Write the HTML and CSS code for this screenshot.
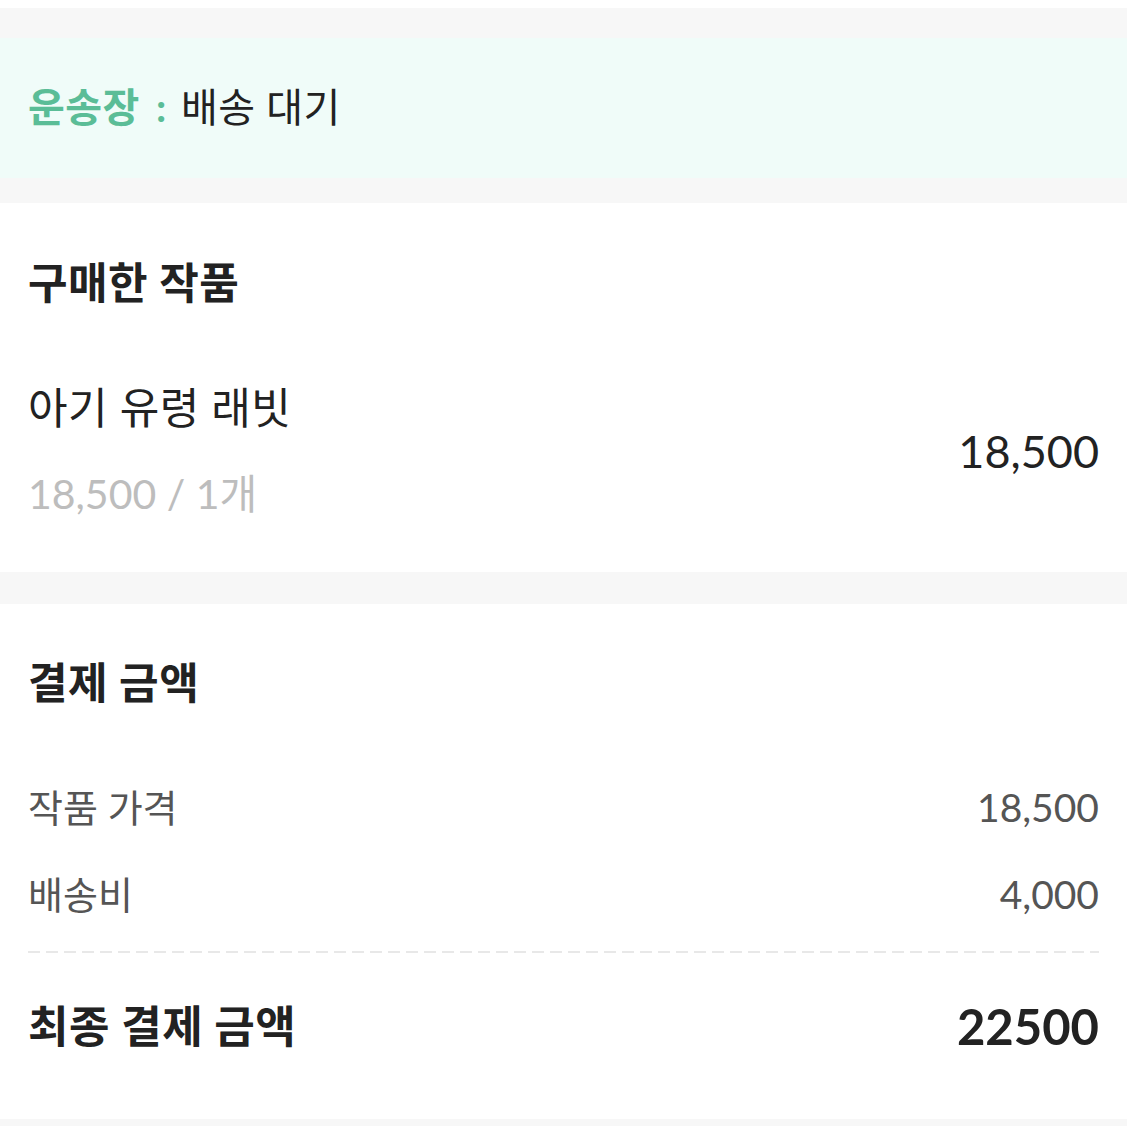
FILE: index.html
```html
<!DOCTYPE html>
<html lang="ko">
<head>
<meta charset="utf-8">
<link rel="stylesheet" href="styles.css">
</head>
<body>
<div class="page">
  <div class="status-wrap">
    <div class="status">
      <span class="status-label">운송장 :</span> <span class="status-value">배송 대기</span>
    </div>
  </div>

  <section class="card">
    <h2 class="title">구매한 작품</h2>
    <div class="product">
      <div class="product-info">
        <div class="product-name">아기 유령 래빗</div>
        <div class="product-sub">18,500 / 1개</div>
      </div>
      <div class="product-price">18,500</div>
    </div>
  </section>

  <div class="divider"></div>

  <section class="card pay">
    <h2 class="title">결제 금액</h2>
    <div class="rows">
      <div class="row"><span class="label">작품 가격</span><span class="num">18,500</span></div>
      <div class="row"><span class="label">배송비</span><span class="num">4,000</span></div>
    </div>
    <div class="dash"></div>
    <div class="total"><span class="label">최종 결제 금액</span><span class="num">22500</span></div>
  </section>

  <div class="bottom"></div>
</div>
</body>
</html>
```

FILE: styles.css
```css
html, body {
  margin: 0;
  padding: 0;
  background: #ffffff;
}
body {
  font-family: "Lato", "Noto Sans CJK KR", sans-serif;
  color: #222222;
}
.page {
  padding-top: 8px;
}
.status-wrap {
  background: #f7f7f7;
  padding: 30px 0 25px;
}
.status {
  background: #f0fcf9;
  height: 140px;
  display: flex;
  align-items: center;
  padding: 0 28px 6px;
  font-size: 40px;
  gap: 14px;
  box-sizing: border-box;
  letter-spacing: 0.5px;
}
.status-label {
  color: #5bbd97;
  font-weight: 700;
  word-spacing: 6px;
}
.status-value {
  color: #222222;
}
.card {
  padding: 52px 28px 50px;
}
.title {
  margin: 0;
  font-size: 43px;
  line-height: 56px;
  font-weight: 700;
  color: #222222;
  letter-spacing: 0.5px;
}
.product {
  margin-top: 69px;
  display: flex;
  align-items: center;
  justify-content: space-between;
}
.product-name {
  font-size: 43px;
  line-height: 56px;
  color: #222222;
  letter-spacing: 0.5px;
}
.product-sub {
  margin-top: 30px;
  font-size: 41px;
  line-height: 56px;
  color: #bdbdbd;
}
.product-price {
  font-size: 45px;
  line-height: 56px;
  color: #222222;
}
.divider {
  height: 32px;
  background: #f7f7f7;
}
.pay {
  padding: 51px 28px 63px;
}
.rows {
  margin-top: 71px;
  display: flex;
  flex-direction: column;
  gap: 37px;
}
.row {
  display: flex;
  justify-content: space-between;
  align-items: center;
  line-height: 50px;
  color: #555555;
}
.row .label {
  font-size: 38px;
}
.row .num {
  font-size: 39px;
}
.dash {
  margin-top: 32px;
  height: 2px;
  background: repeating-linear-gradient(to right, #e8e8e8 0 12px, transparent 12px 18px);
}
.total {
  margin-top: 43px;
  display: flex;
  justify-content: space-between;
  align-items: center;
  line-height: 60px;
  font-weight: 700;
  color: #222222;
}
.total .label {
  font-size: 44px;
  letter-spacing: 0.5px;
}
.total .num {
  font-size: 49px;
}
.bottom {
  height: 7px;
  background: #f7f7f7;
}
```
